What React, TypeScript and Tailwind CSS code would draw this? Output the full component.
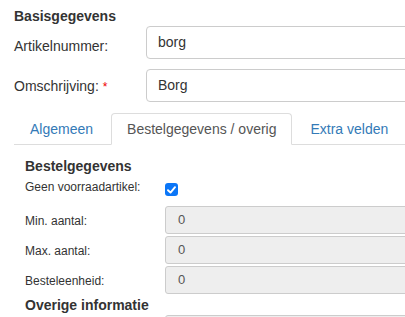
const Checkbox = () => (
  <span className="mt-[5px] flex h-[13px] w-[13px] items-center justify-center rounded-[3px] bg-[#0b76f7]">
    <svg width="9" height="8" viewBox="0 0 9 8" fill="none">
      <path d="M1 4.2 L3.5 6.6 L8 1.2" stroke="white" strokeWidth="1.9" strokeLinecap="round" strokeLinejoin="round" />
    </svg>
  </span>
);

const GreyRow = ({ label, value }: { label: string; value: string }) => (
  <div className="flex h-[28px] items-center">
    <label className="w-[140px] shrink-0 text-[12px] leading-[14px] pt-[2px]">{label}</label>
    <div className="flex h-[28px] w-[300px] shrink-0 items-center rounded-[3px] border border-[#cccccc] bg-[#eeeeee] pl-[12px] text-[13px] text-[#555]">
      {value}
    </div>
  </div>
);

const App = () => {
  return (
    <div
      className="h-[317px] w-[405px] overflow-hidden bg-white text-[#333]"
      style={{ fontFamily: '"Liberation Sans", Arial, sans-serif' }}
    >
      <div className="pl-[14px] pt-[8px]">
        <h3 className="text-[14px] font-bold leading-[17px]">Basisgegevens</h3>

        <div className="mt-[1px] flex flex-col gap-[10px]">
          <div className="flex items-start">
            <label className="w-[132px] shrink-0 pt-[12px] text-[14px] leading-[17px]">Artikelnummer:</label>
            <div className="flex h-[33px] w-[300px] shrink-0 items-center rounded-[4px] border border-[#cccccc] pl-[11px] text-[14px]">
              borg
            </div>
          </div>
          <div className="flex items-start">
            <label className="w-[132px] shrink-0 pt-[9px] text-[14px] leading-[17px]">
              Omschrijving: <span className="text-[#e00] text-[12px]">*</span>
            </label>
            <div className="flex h-[33px] w-[300px] shrink-0 items-center rounded-[4px] border border-[#cccccc] pl-[11px] text-[14px]">
              Borg
            </div>
          </div>
        </div>

        <div className="mt-[11px] flex h-[32px] items-end border-b border-[#dddddd]">
          <div className="mr-[2px] -mb-px flex h-[31px] items-center px-[16px] text-[14px] text-[#337ab7]">Algemeen</div>
          <div className="mr-[2px] -mb-px flex h-[32px] items-center rounded-t-[4px] border border-b-white border-[#dddddd] bg-white px-[15px] text-[14px] text-[#555]">
            Bestelgegevens / overig
          </div>
          <div className="-mb-px flex h-[31px] items-center px-[16px] text-[14px] text-[#337ab7]">Extra velden</div>
        </div>

        <div className="pl-[11px] pt-[13px]">
          <h4 className="text-[14px] font-bold leading-[17px]">Bestelgegevens</h4>

          <div className="mt-[3px] flex h-[28px] items-start">
            <label className="w-[140px] shrink-0 pt-[2px] text-[12px] leading-[14px]">Geen voorraadartikel:</label>
            <Checkbox />
          </div>

          <div className="flex flex-col gap-[2px]">
            <GreyRow label="Min. aantal:" value="0" />
            <GreyRow label="Max. aantal:" value="0" />
            <GreyRow label="Besteleenheid:" value="0" />
          </div>

          <h4 className="mt-[3px] text-[14px] font-bold leading-[17px]">Overige informatie</h4>

          <div className="mt-[1px] flex">
            <div className="w-[140px] shrink-0" />
            <div className="h-[28px] w-[300px] shrink-0 rounded-[3px] border border-[#cccccc] bg-[#eeeeee]" />
          </div>
        </div>
      </div>
    </div>
  );
};

export default App;
